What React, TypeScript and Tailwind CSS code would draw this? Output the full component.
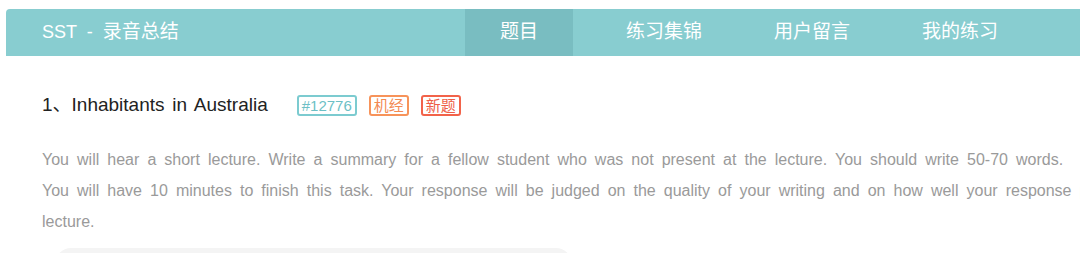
const tabs = ['题目', '练习集锦', '用户留言', '我的练习'];

const tags = [
  { label: '#12776', cls: 'border-[#7ccbd0] text-[#6dbfc5]' },
  { label: '机经', cls: 'border-[#f7935a] text-[#f38a52]' },
  { label: '新题', cls: 'border-[#f2634a] text-[#ee5f48]' },
];

export default function App() {
  return (
    <div
      className="w-[1080px] h-[253px] overflow-hidden bg-white"
      style={{ fontFamily: '"Liberation Sans", Arial, "Noto Sans CJK SC", sans-serif' }}
    >
      <div className="w-[1500px] pl-[6px] pt-[9px]">
        {/* 상단 헤더 */}
        <div className="flex h-[47px] items-stretch rounded-tl-[4px] bg-[#88cdd0] text-[19px] text-white">
          <div className="flex w-[459px] items-center pl-9">
            <span className="text-[18px] [word-spacing:5px]">
              SST - <span className="text-[19px]">录音总结</span>
            </span>
          </div>
          {tabs.map((tab, i) => (
            <div
              key={tab}
              className={
                i === 0
                  ? 'flex items-center bg-[#79bdc1] px-[35px]'
                  : i === 1
                    ? 'ml-[17px] flex items-center px-9'
                    : 'flex items-center px-9'
              }
            >
              {tab}
            </div>
          ))}
        </div>

        {/* 문제 제목 */}
        <div className="mt-[39px] flex h-[21px] items-center pl-9">
          <span className="text-[19px] text-[#222] [word-spacing:2.5px]">1、Inhabitants in Australia</span>
          <div className="ml-[29px] flex gap-3">
            {tags.map((t) => (
              <span
                key={t.label}
                className={`flex h-[21px] items-center rounded-[3px] border-2 px-[3px] text-[15px] leading-none ${t.cls}`}
              >
                {t.label}
              </span>
            ))}
          </div>
        </div>

        <p className="mt-[28px] w-[1420px] pl-9 text-[16px] leading-[31px] text-[#9a9a9a] [word-spacing:3.6px]">
          You will hear a short lecture. Write a summary for a fellow student who was not present at the lecture. You
          should write 50-70 words.
          <br />
          You will have 10 minutes to finish this task. Your response will be judged on the quality of your writing and
          on how well your response presents the key points presented in the lecture.
        </p>

        <div className="ml-[49px] mt-[11px] h-[40px] w-[517px] rounded-[16px] bg-[#f4f4f4]" />
      </div>
    </div>
  );
}
